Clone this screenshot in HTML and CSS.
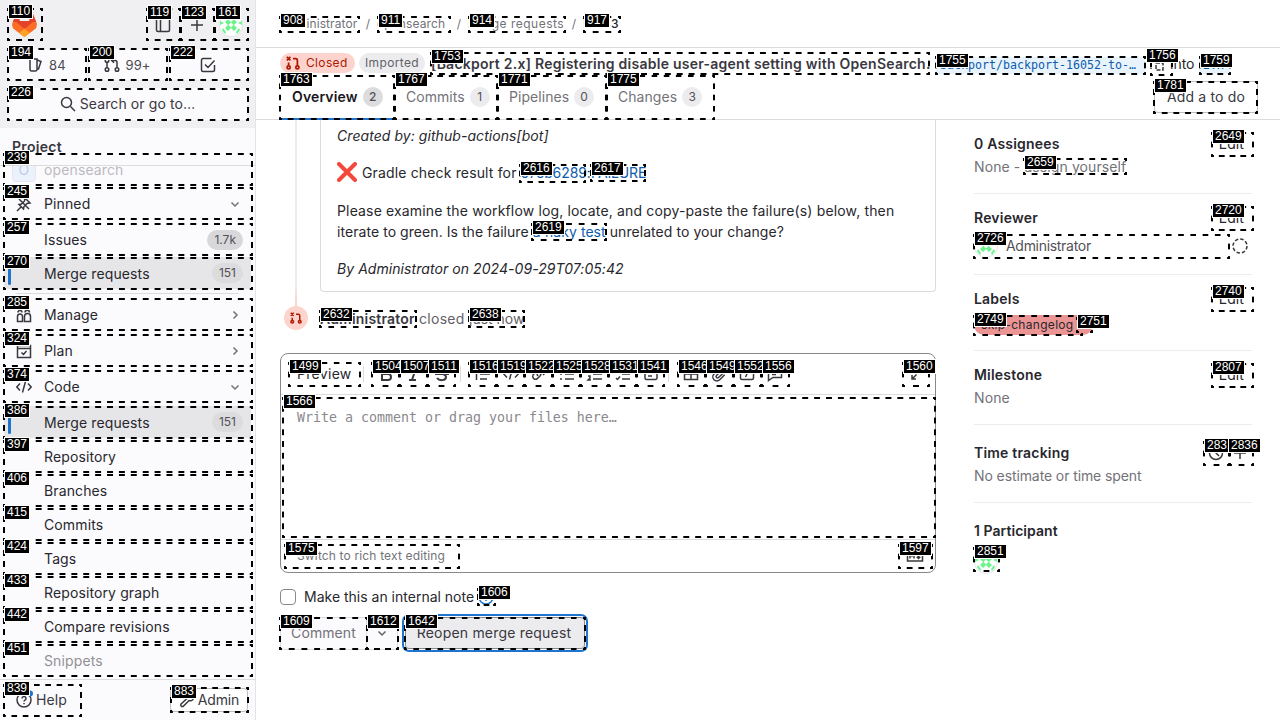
FILE: index.html
```html
<!DOCTYPE html>
<html lang="en">
<head>
<meta charset="utf-8">
<title>Merge request</title>
<link rel="stylesheet" href="styles.css">
</head>
<body>
<svg class="defs" aria-hidden="true">
  <symbol id="mr" viewBox="0 0 16 16"><circle cx="3" cy="12.5" r="1.8"/><circle cx="13" cy="12.5" r="1.8"/><circle cx="3" cy="3.5" r="1.8"/><path d="M3 5.5v5M13 10.500V5.500a2 2 0 0 0-2-2H8M10 1.200 7.700 3.500 10 5.800"/></symbol>
  <symbol id="mrx" viewBox="0 0 16 16"><circle cx="3" cy="13" r="1.800"/><circle cx="13" cy="13" r="1.800"/><path d="M1 1l4 4M5 1 1 5M3 7.500v3.500M13 11V5a2 2 0 0 0-2-2H8"/></symbol>
  <symbol id="check" viewBox="0 0 16 16"><path d="M14.500 8v5a1.500 1.500 0 0 1-1.500 1.500H3A1.500 1.500 0 0 1 1.500 13V3A1.500 1.500 0 0 1 3 1.500h8.500M5 7.500l3 3 6.500-7"/></symbol>
  <symbol id="down" viewBox="0 0 16 16"><path d="M4.500 6.500 8 10l3.500-3.500"/></symbol>
  <symbol id="right" viewBox="0 0 16 16"><path d="M6.500 4.500 10 8l-3.500 3.500"/></symbol>
  <symbol id="plus" viewBox="0 0 16 16"><path d="M8 2v12M2 8h12"/></symbol>
  <symbol id="code" viewBox="0 0 16 16"><path d="M4 4.500.800 8 4 11.500M12 4.500 15.200 8 12 11.500M9.500 2.500l-3 11"/></symbol>
  <symbol id="avatar" viewBox="0 0 24 24"><circle cx="12" cy="12" r="11.500" fill="#fff" stroke="#e4e4e8" stroke-width="1"/><path fill="#6cf48c" stroke="none" d="M5 4l4-2v4zM19 4l-4-2v4zM6 9l3-3 3 3 3-3 3 3-3 3 3 3-3 3-3-3-3 3-3-3 3-3zM1 8l4 2-4 2zM23 8l-4 2 4 2zM4 15l3 4-1 2-3-4zM20 15l-3 4 1 2 3-4z"/><path fill="#fff" stroke="none" d="M12 9.500l2.500 2.500-2.500 2.500L9.500 12z"/></symbol>
</svg>
<div class="app">
  <nav class="side">
    <div class="side-top">
      <div class="brand">
        <svg class="logo" viewBox="0 0 25 24"><path fill="#e24329" d="M24.500 9.500 21 .700a1 1 0 0 0-1.700.100L17 8H8L5.700.800A1 1 0 0 0 4 .700L.500 9.500z"/><path fill="#fc6d26" d="M.500 9.500 8 8l4.500 4L17 8l7.500 1.500a6.500 6.500 0 0 1-2.300 7.300L12.500 24l-9.700-7.200A6.500 6.500 0 0 1 .500 9.500z"/><path fill="#e24329" d="M3 8h19l-9.500 8z"/><path fill="#fca326" d="m12.500 15.500 5.300 4.500-5.300 4-5.300-4z"/></svg>
        <div class="brand-tools">
          <svg class="ic"><path d="M1.500 3A1.500 1.500 0 0 1 3 1.500h10A1.500 1.500 0 0 1 14.500 3v10a1.500 1.500 0 0 1-1.500 1.500H3A1.500 1.500 0 0 1 1.500 13zM5.500 1.500v13"/></svg>
          <svg class="ic"><use href="#plus"/></svg>
          <svg class="av"><use href="#avatar"/></svg>
        </div>
      </div>
      <div class="counts">
        <span class="chip"><svg class="ic"><path d="M2 2h7v10.500A1.500 1.500 0 0 1 7.500 14h-4A1.500 1.500 0 0 1 2 12.500zM9 3l4 1.500L10.500 12H9"/></svg>84</span>
        <span class="chip"><svg class="ic"><use href="#mr"/></svg>99+</span>
        <span class="chip"><svg class="ic"><use href="#check"/></svg></span>
      </div>
      <div class="search"><svg class="ic"><circle cx="6.500" cy="6.500" r="5"/><path d="M10.500 10.500l4.500 4.500"/></svg>Search or go to…</div>
    </div>
    <div class="side-title">Project</div>
    <div class="menu">
      <div class="item proj"><span class="proj-av">O</span><span class="name">opensearch</span></div>
      <div class="item"><svg class="ic"><path d="M1 15l4.500-4.500M9 2l5 5-3 .500-3 3L7.500 13 3 8.500l2.500-.500 3-3zM3 3l10 10"/></svg><span class="name">Pinned</span><svg class="ic chev"><use href="#down"/></svg></div>
      <div class="item sub first"><span class="name">Issues</span><span class="badge strong">1.7k</span></div>
      <div class="item sub active pin"><i></i><span class="name">Merge requests</span><span class="badge">151</span></div>
      <hr>
      <div class="item top"><svg class="ic"><path d="M1.500 14.500v-5a2.500 2.500 0 0 1 5 0v5zM8.500 14.500v-5a3 3 0 0 1 6 0v5zM2 5.500a2 2 0 1 1 4 0M9 5.500a2.200 2.200 0 1 1 4.500 0"/></svg><span class="name">Manage</span><svg class="ic chev"><use href="#right"/></svg></div>
      <div class="item top"><svg class="ic"><path d="M1.500 2.500h13v12h-13zM1.500 5.500h13M5.500 9.500l2 2 3-3.500"/></svg><span class="name">Plan</span><svg class="ic chev"><use href="#right"/></svg></div>
      <div class="item top"><svg class="ic"><use href="#code"/></svg><span class="name">Code</span><svg class="ic chev"><use href="#down"/></svg></div>
      <div class="item sub active"><i></i><span class="name">Merge requests</span><span class="badge">151</span></div>
      <div class="item sub"><span class="name">Repository</span></div>
      <div class="item sub"><span class="name">Branches</span></div>
      <div class="item sub"><span class="name">Commits</span></div>
      <div class="item sub"><span class="name">Tags</span></div>
      <div class="item sub"><span class="name">Repository graph</span></div>
      <div class="item sub"><span class="name">Compare revisions</span></div>
      <div class="item sub faded"><span class="name">Snippets</span></div>
    </div>
    <div class="side-foot">
      <span class="help"><svg class="ic"><circle cx="8" cy="8" r="7"/><path d="M6 6.500a2 2 0 1 1 3 1.700c-.700.400-1 .700-1 1.300M8 11v1.200"/><circle class="dot" cx="14" cy="1.500" r="3"/></svg>Help</span>
      <span class="admin"><svg class="ic"><path d="M2 12l6-5.500a3.500 3.500 0 0 1 4.500-4.500L10.500 4l1.500 1.500 2.500-1.500A3.500 3.500 0 0 1 10 8.500L4 14.500a1.700 1.700 0 0 1-2-2.500z"/></svg>Admin</span>
    </div>
  </nav>
  <main class="main">
    <div class="crumbs"><span class="c1">Administrator</span><b>/</b><span class="c2">opensearch</span><b>/</b><span class="c3">Merge requests</span><b>/</b><span class="c4">!3533</span></div>
    <header class="sticky">
      <div class="title-row">
        <span class="pill closed"><svg class="ic"><use href="#mrx"/></svg>Closed</span>
        <span class="pill imported">Imported</span>
        <h1>[Backport 2.x] Registering disable user-agent setting with OpenSearch.</h1>
        <code class="branch">backport/backport-16052-to-…</code>
        <svg class="ic copy"><path d="M1 5v7M6 6h7v7H6z" stroke-dasharray="4 1.500"/></svg>
        <span class="into">into</span>
        <code class="target">2.x</code>
      </div>
      <div class="tabs">
        <span class="tab on t1">Overview<em>2</em></span>
        <span class="tab t2">Commits<em>1</em></span>
        <span class="tab t3">Pipelines<em>0</em></span>
        <span class="tab t4">Changes<em>3</em></span>
        <span class="todo">Add a to do</span>
      </div>
    </header>
    <div class="body">
      <section class="thread">
        <div class="note-row">
          <div class="rail"></div>
          <article class="note">
            <p class="it n1">Created by: github-actions[bot]</p>
            <p class="n2"><svg class="cross" viewBox="0 0 20 20"><path d="M2 2l16 16M18 2 2 18"/></svg>Gradle check result for <a class="hash">97eb6289</a>: <a class="fail">FAILURE</a></p>
            <p class="n3">Please examine the workflow log, locate, and copy-paste the failure(s) below, then<br><span class="tight">iterate to green. Is the failure <a>a flaky test</a> unrelated to your change?</span></p>
            <p class="it n4">By Administrator on 2024-09-29T07:05:42</p>
          </article>
        </div>
        <div class="event"><span class="event-ic"><svg class="ic"><use href="#mrx"/></svg></span><strong>Administrator</strong><span class="closed-w">closed</span><span>just now</span></div>
        <div class="editor">
          <div class="toolbar">
            <span class="preview">Preview</span>
            <span class="sep"></span>
            <div class="grp g1">
              <svg class="ic heavy"><path d="M4 2h5a3 3 0 0 1 0 6H4zM4 8h6a3 3 0 0 1 0 6H4z"/></svg>
              <svg class="ic heavy"><path d="M6 2h7M3 14h7M10 2 6 14"/></svg>
              <svg class="ic heavy"><path d="M12 4c-1-2-8-3-8 1 0 3 8 2 8 6 0 4-7 4-9 1M1 8h14"/></svg>
            </div>
            <span class="sep"></span>
            <div class="grp g2">
              <svg class="ic"><path d="M1.500 2v12M5 3h10M5 8h10M5 13h7"/></svg>
              <svg class="ic"><use href="#code"/></svg>
              <svg class="ic"><path d="M7 10a3 3 0 0 1 0-4l3-3a3 3 0 0 1 4 4l-2 2M9 6a3 3 0 0 1 0 4l-3 3a3 3 0 0 1-4-4l2-2"/></svg>
              <svg class="ic"><path d="M1 3h2M1 8h2M1 13h2M6 3h9M6 8h9M6 13h9"/></svg>
              <svg class="ic"><path d="M1 3h2v3M1 10h2v2l-2 2h3M6 3h9M6 8h9M6 13h9"/></svg>
              <svg class="ic"><path d="M1 3l1.500 1.500L5 1.500M1 12l1.500 1.500L5 10.500M7 3h8M7 8h8M7 13h8"/></svg>
              <svg class="ic"><path d="M2 3a1.500 1.500 0 0 1 1.500-1.500h9A1.500 1.500 0 0 1 14 3v9a1.500 1.500 0 0 1-1.500 1.500h-9A1.500 1.500 0 0 1 2 12zM5 7h6M5 10h4"/></svg>
            </div>
            <span class="sep"></span>
            <div class="grp g3">
              <svg class="ic"><path d="M1.500 2.500h13v11h-13zM1.500 8h13M8 2.500v11"/></svg>
              <svg class="ic"><path d="M11 4 5.500 9.500a1.400 1.400 0 0 0 2 2L13.500 6a3 3 0 0 0-4.200-4.200L3 8a4 4 0 0 0 5.700 5.700l5-5"/></svg>
              <svg class="ic"><path d="M1.500 3A1.500 1.500 0 0 1 3 1.500h10A1.500 1.500 0 0 1 14.500 3v9a1.500 1.500 0 0 1-1.500 1.500H3A1.500 1.500 0 0 1 1.500 12zM9.500 5l-3 6"/></svg>
              <svg class="ic"><path d="M1.500 2.500h13v9H6l-4.500 3zM5 5.500h6M5 8.500h4"/></svg>
            </div>
            <svg class="ic full"><path d="M9 7l5-5M10 2h4v4M7.500 8.500 3 13M3 9v4h4"/></svg>
          </div>
          <div class="area">Write a comment or drag your files here…</div>
          <div class="ed-foot"><span>Switch to rich text editing</span><svg class="ic"><path d="M.500 3h15v10H.500zM3 10.500v-5l2 2.500 2-2.500v5M11.500 5.500v5M9.700 8.700l1.800 1.800 1.800-1.800"/></svg></div>
        </div>
        <div class="internal"><span class="box"></span><span class="int-t">Make this an internal note</span><svg class="ic info"><circle cx="8" cy="8" r="7"/><path d="M8 7v5M8 4v1.500"/></svg></div>
        <div class="actions"><span class="btn cm">Comment</span><span class="btn dd"><svg class="ic"><use href="#down"/></svg></span><span class="btn reopen">Reopen merge request</span></div>
      </section>
      <aside class="aside">
        <div class="blk b1"><div class="hd"><strong>0 Assignees</strong><span>Edit</span></div><p>None - assign yourself</p></div>
        <div class="blk b2"><div class="hd"><strong>Reviewer</strong><span>Edit</span></div><div class="rev"><svg class="av"><use href="#avatar"/></svg><span>Administrator</span><svg class="ic dash"><circle cx="8" cy="8" r="7"/></svg></div></div>
        <div class="blk b3"><div class="hd"><strong>Labels</strong><span>Edit</span></div><span class="label">skip-changelog</span></div>
        <div class="blk b4"><div class="hd"><strong>Milestone</strong><span>Edit</span></div><p>None</p></div>
        <div class="blk b5"><div class="hd"><strong>Time tracking</strong><span class="tt"><svg class="ic"><circle cx="8" cy="8" r="6.500"/><path d="M8 4v4l3 3"/></svg><svg class="ic"><use href="#plus"/></svg></span></div><p>No estimate or time spent</p></div>
        <div class="blk b6"><div class="hd"><strong>1 Participant</strong></div><svg class="av"><use href="#avatar"/></svg></div>
      </aside>
    </div>
  </main>
</div>
<div class="marks" id="marks"></div>
<script src="marks.js"></script>
</body>
</html>
```
FILE: styles.css
```css
* { box-sizing: border-box; }
body { margin: 0; width: 1280px; height: 720px; overflow: hidden; font: 14px/20px Inter, "Noto Sans", sans-serif; color: #28272d; background: #fff; }
p, h1 { margin: 0; }
.defs { position: absolute; width: 0; height: 0; }
.ic { width: 16px; height: 16px; flex: none; fill: none; stroke: #3a383f; stroke-width: 1.5; overflow: visible; }
.heavy { stroke-width: 2; }
.dot { fill: #1f75cb; stroke: none; }
.av { width: 24px; height: 24px; flex: none; display: block; }
.app { display: flex; height: 720px; }
.side { width: 256px; flex: none; display: flex; flex-direction: column; background: #fbfafd; border-right: 1px solid #e4e4e8; letter-spacing: .12px; }
.side-top { height: 128px; background: #f0f0f2; padding: 8px; display: flex; flex-direction: column; gap: 8px; }
.brand { height: 33px; display: flex; justify-content: space-between; align-items: center; padding: 0 5px 0 4px; }
.logo { width: 25px; height: 24px; }
.brand-tools { display: flex; align-items: center; gap: 18px; margin-right: -1px; }
.brand-tools .av { margin-left: -4px; }
.counts { display: flex; gap: 3px; }
.chip { flex: 1; height: 31px; background: #fbfafd; border-radius: 4px; display: flex; align-items: center; justify-content: center; gap: 5px; font-size: 13px; color: #4c4b51; }
.search { height: 32px; background: #fbfafd; border-radius: 4px; display: flex; align-items: center; justify-content: center; gap: 4px; color: #3a383f; letter-spacing: .1px; }
.side-title { height: 38px; padding: 9px 12px 0; font-weight: 600; color: #3a383f; border-bottom: 1px solid #dcdcde; letter-spacing: .3px; }
.menu { flex: 1; overflow: hidden; padding: 0 4px; display: flex; flex-direction: column; }
.item { height: 32px; flex: none; display: flex; align-items: center; padding: 0 8px 0 12px; border-radius: 4px; margin-bottom: 2px; }
.item .name { margin-left: 12px; }
.item.sub .name { margin-left: 28px; }
.item.sub i + .name { margin-left: 33px; }
.chev { margin-left: auto; stroke: #737278; }
.proj { margin-top: -12px; padding-left: 8px; opacity: .3; }
.proj-av { width: 24px; height: 24px; border-radius: 4px; background: #cbe2f9; border: 1px solid #bbc; color: #2f68b4; text-align: center; line-height: 22px; }
.proj .name { margin-left: 8px; }
.item.first { margin-top: 2px; margin-bottom: 1px; }
.item.active { background: #e6e6e9; padding-left: 4px; }
.item.active .name { padding-top: 1px; }
.item.active i { width: 3px; height: 24px; border-radius: 2px; background: #1f75cb; }
.item.pin { margin-bottom: 4px; }
.badge { margin-left: auto; padding: 0 7px; height: 20px; border-radius: 10px; background: #dcdcde; color: #535158; font-size: 12px; letter-spacing: 0; }
.strong { background: #d8d8db; }
hr { width: 223px; margin: 0 0 5px 12px; border: 0; border-top: 1px solid #dcdcde; flex: none; }
.item.top { margin-bottom: 4px; }
.item.top + .item.sub { margin-top: -1px; }
.item.top + .item.sub + .item.sub { margin-top: 1px; }
.faded { opacity: .5; }
.side-foot { height: 41px; border-top: 1px solid #dcdcde; display: flex; justify-content: space-between; align-items: center; padding: 0 7px 0 16px; color: #3a383f; }
.help, .admin { display: flex; align-items: center; gap: 4px; }
.admin { height: 24px; border: 1px solid #bfbfc3; border-radius: 4px; padding: 0 8px; gap: 3px; background: #fff; letter-spacing: -.2px; }
.main { flex: 1; min-width: 0; display: flex; flex-direction: column; }
.crumbs { height: 48px; border-bottom: 1px solid #dcdcde; padding: 0 24px; display: flex; align-items: center; font-size: 12px; color: #737278; letter-spacing: .1px; }
.crumbs b { font-weight: 400; width: 18px; text-align: center; }
.c1 { width: 79px; } .c2 { width: 73px; } .c3 { width: 97px; letter-spacing: .5px; } .c4 { color: #28272d; font-weight: 500; letter-spacing: .5px; }
.sticky { height: 72px; border-bottom: 1px solid #dcdcde; padding: 4px 22px 0 24px; }
.title-row { height: 23px; display: flex; align-items: center; white-space: nowrap; }
.pill { height: 20px; margin-top: -1px; border-radius: 10px; font-size: 12px; padding: 0 6px; display: flex; align-items: center; gap: 4px; letter-spacing: .35px; }
.closed { width: 75px; gap: 6px; background: #fdd4cd; color: #ae1800; }
.closed .ic, .event-ic .ic { stroke: #ae1800; stroke-width: 2; width: 14px; height: 14px; }
.imported { width: 66px; margin-left: 4px; background: #ececef; color: #626168; }
h1 { width: 505px; margin-left: 6px; font-size: 14px; line-height: 20px; font-weight: 600; color: #3a383f; letter-spacing: .25px; }
code { font: 11.63px/16px "DejaVu Sans Mono", monospace; color: #0b5cad; background: #e9f3fc; border-radius: 3px; padding: 0 4px; height: 17px; margin-top: 3px; }
.branch { width: 209px; }
.copy { margin: 0 5px 0 5px; width: 14px; height: 14px; }
.into { width: 29px; margin-left: 1px; }
.target { width: 31px; }
.tabs { height: 45px; display: flex; align-items: center; }
.tab { height: 45px; flex: none; display: flex; align-items: center; gap: 5px; padding: 0 12px 2px; color: #737278; letter-spacing: .05px; }
.tab em { font-style: normal; font-size: 12px; min-width: 20px; height: 20px; text-align: center; border-radius: 10px; background: #ececef; color: #535158; }
.tab.on { color: #18171d; font-weight: 600; border-bottom: 2px solid #1f75cb; padding-bottom: 0; letter-spacing: .15px; }
.tab.on em { background: #dcdcde; font-weight: 500; }
.t1 { width: 114px; } .t2 { width: 103px; } .t3 { width: 109px; } .t4 { width: 108px; }
.todo { margin: -1px 0 0 auto; width: 104px; height: 32px; border: 1px solid #bfbfc3; border-radius: 4px; display: flex; align-items: center; justify-content: center; color: #3a383f; letter-spacing: .15px; }
.body { display: flex; padding: 0 28px 0 24px; }
.thread { width: 656px; flex: none; }
.note-row { display: flex; height: 186px; }
.rail { width: 2px; margin: 0 23px 0 15px; background: linear-gradient(#ececef 165px, #fdd4cd 180px); }
.note { width: 616px; height: 172px; border: 1px solid #dcdcde; border-top: 0; border-radius: 0 0 4px 4px; padding: 5px 16px 0; line-height: 21px; letter-spacing: .15px; white-space: nowrap; }
.it { font-style: italic; letter-spacing: .06px; }
.n2, .n3, .n4 { margin-top: 16px; }
.n1 { height: 21px; }
.n2 { height: 22px; }
.tight { letter-spacing: .06px; }
.hash { letter-spacing: -.1px; }
.fail { letter-spacing: -.15px; margin-left: -4px; }
.cross { width: 20px; height: 20px; vertical-align: -4px; margin-right: 5px; stroke: #f4483c; stroke-width: 4; stroke-linecap: round; }
a { color: #0b5cad; }
.event { height: 24px; display: flex; align-items: center; color: #626168; padding-left: 4px; }
.event > strong, .event > span + span, .event > strong + span { padding-top: 1px; }
.event-ic { width: 24px; height: 24px; border-radius: 50%; background: #fdd4cd; display: grid; place-items: center; margin-right: 12px; }
.event-ic .ic { width: 12px; height: 12px; }
.event strong { width: 99px; font-weight: 600; color: #3a383f; letter-spacing: .2px; }
.event .closed-w { width: 50px; letter-spacing: .3px; }
.editor { margin-top: 23px; height: 220px; border: 1px solid #89888d; border-radius: 8px; display: flex; flex-direction: column; }
.toolbar { height: 41px; display: flex; align-items: center; border-bottom: 1px solid #dcdcde; padding: 0 10px 0 16px; }
.preview { width: 66px; letter-spacing: .3px; }
.sep { width: 1px; height: 16px; background: #dcdcde; }
.grp { display: flex; gap: 12px; }
.g1 { margin: 0 10px 0 14px; } .g2 { margin: 0 9px 0 14px; } .g3 { margin-left: 14px; }
.full { margin-left: auto; }
.area { flex: 1; padding: 13px 16px; font: 13.29px/20px "DejaVu Sans Mono", monospace; color: #89888d; }
.ed-foot { height: 33px; border-top: 1px solid #dcdcde; display: flex; align-items: center; justify-content: space-between; padding: 0 12px 0 16px; font-size: 12px; color: #737278; letter-spacing: .15px; }
.internal { height: 20px; margin-top: 14px; display: flex; align-items: center; }
.box { width: 16px; height: 16px; border: 1px solid #89888d; border-radius: 4px; }
.int-t { width: 175px; margin-left: 8px; letter-spacing: 0; white-space: nowrap; }
.info { stroke: #1f75cb; margin-left: -1px; }
.actions { display: flex; margin-top: 10px; letter-spacing: .1px; }
.btn { height: 33px; border: 1px solid #dcdcde; display: flex; align-items: center; justify-content: center; background: #fbfafd; color: #737278; padding-bottom: 2px; }
.cm { width: 87px; border-radius: 4px 0 0 4px; }
.dd { width: 31px; border-left: 0; border-radius: 0 4px 4px 0; }
.dd .ic { stroke: #626168; }
.reopen { width: 180px; height: 32px; margin-left: 7px; background: #ececef; border-color: #89888d; border-radius: 4px; color: #3a383f; box-shadow: 0 0 0 1px #fff, 0 0 0 3px #1f75cb; letter-spacing: .2px; padding: 0 2px 1px 0; }
.aside { width: 278px; margin-left: 38px; }
.blk { border-bottom: 1px solid #ececef; padding-top: 14px; letter-spacing: .1px; }
.b1 { height: 74px; } .b2 { height: 81px; } .b3 { height: 76px; } .b4 { height: 74px; }
.b5 { height: 78px; padding-top: 18px; } .b6 { border: 0; padding-top: 18px; }
.hd { display: flex; justify-content: space-between; padding-right: 8px; height: 20px; }
.hd strong { font-weight: 600; letter-spacing: .2px; }
.b6 .hd strong { letter-spacing: .05px; }
.hd .tt { display: flex; gap: 8px; align-items: center; margin-right: -4px; }
.blk p { margin-top: 3px; color: #737278; }
.b5 p { letter-spacing: -.1px; }
.rev { display: flex; align-items: center; margin-top: 6px; color: #535158; }
.rev span { margin-left: 8px; letter-spacing: -.3px; }
.rev .dash { margin: 0 4px 0 auto; stroke-dasharray: 3.5 2; }
.label { display: block; width: 119px; height: 20px; border-radius: 10px; background: #eb9494; font-size: 12px; padding-left: 7px; margin-top: 6px; letter-spacing: .3px; }
.b6 .av { margin-top: 9px; }
.marks { position: absolute; inset: 0; overflow: hidden; }
.mark {
  --h: linear-gradient(90deg, #000 3px, transparent 3px calc(100% - 3px), #000 calc(100% - 3px));
  --v: linear-gradient(#000 3px, transparent 3px calc(100% - 3px), #000 calc(100% - 3px));
  position: absolute;
  background:
    var(--h) 0 0 / 12px 2px round no-repeat,
    var(--h) 0 100% / 12px 2px round no-repeat,
    var(--v) 0 0 / 2px 12px no-repeat round,
    var(--v) 100% 0 / 2px 12px no-repeat round;
}
.tag { position: absolute; height: 13px; padding: 0 2px; background: #000; color: #fff; outline: 1px solid #fff; font: 12px/13px "Liberation Sans", sans-serif; }
```
FILE: marks.js
```
// Element markers: id, left, top, right, bottom, tag offset x, tag offset y
const marks = [
  [110,7,8,43,41,2,-3],[119,146,8,181,41,2,-2],[123,180,8,215,41,2,-2],[161,214,8,249,41,2,-2],
  [194,7,48,87,81],[200,88,48,168,81],[222,169,48,249,81],[226,7,88,249,121],
  [239,3,153,253,186],[245,3,187,253,220],[257,3,223,253,256],[270,3,257,253,290],
  [285,3,298,253,331],[324,3,334,253,367],[374,3,370,253,403],[386,3,406,253,439],
  [397,3,440,253,473],[406,3,474,253,507],[415,3,508,253,541],[424,3,542,253,575],
  [433,3,576,253,609],[442,3,610,253,643],[451,3,644,253,677],[839,3,684,82,717],[883,170,687,249,713],
  [908,279,16,360,33],[911,377,16,451,33],[914,468,16,566,33],[917,583,16,621,33],
  [1753,430,52,930,75],[1755,935,56,1146,75],[1756,1150,52,1173,76,-3,-3],[1759,1199,56,1231,75],
  [1763,279,75,395,120],[1767,394,75,498,120],[1771,497,75,607,120],[1775,606,75,715,120],[1781,1153,81,1258,114],
  [2616,519,164,586,183],[2617,590,164,646,182],[2619,531,223,607,241],[2632,319,310,417,328],[2638,468,310,525,328],
  [1499,288,362,361,387],[1504,371,362,400,387],[1507,399,362,428,387],[1511,427,362,456,387],
  [1516,468,362,497,387],[1519,496,362,525,387],[1522,524,362,553,387],[1525,552,362,581,387],[1528,580,362,609,387],
  [1531,608,362,637,387],[1541,636,362,665,387],[1546,677,362,706,387],[1549,705,362,734,387],[1552,733,362,762,387],
  [1556,761,362,790,387],[1560,902,362,930,387],[1566,282,397,936,538],[1575,284,544,460,569],[1597,898,544,933,569],
  [1606,477,588,496,606],[1609,279,617,368,650],[1612,366,617,399,650],[1642,404,617,586,650],
  [2649,1211,132,1254,157],[2659,1023,158,1127,175],[2720,1211,206,1254,231],[2726,973,234,1230,259],
  [2740,1211,287,1254,312],[2749,973,315,1083,336],[2751,1076,317,1093,333],[2807,1211,363,1254,388],
  [2831,1203,441,1230,466],[2836,1229,441,1254,466,0,-2],[2851,973,547,1000,572]
];
const layer = document.getElementById("marks");
for (const [id, l, t, r, b] of marks) {
  const box = document.createElement("div");
  box.className = "mark";
  box.style.cssText = `left:${l}px;top:${t}px;width:${r - l}px;height:${b - t}px`;
  layer.append(box);
}
for (const [id, l, t, r, b, dx = 2, dy = -2] of marks) {
  const tag = document.createElement("span");
  tag.className = "tag";
  tag.textContent = id;
  tag.style.cssText = `left:${l + dx}px;top:${t + dy}px`;
  layer.append(tag);
}
```
